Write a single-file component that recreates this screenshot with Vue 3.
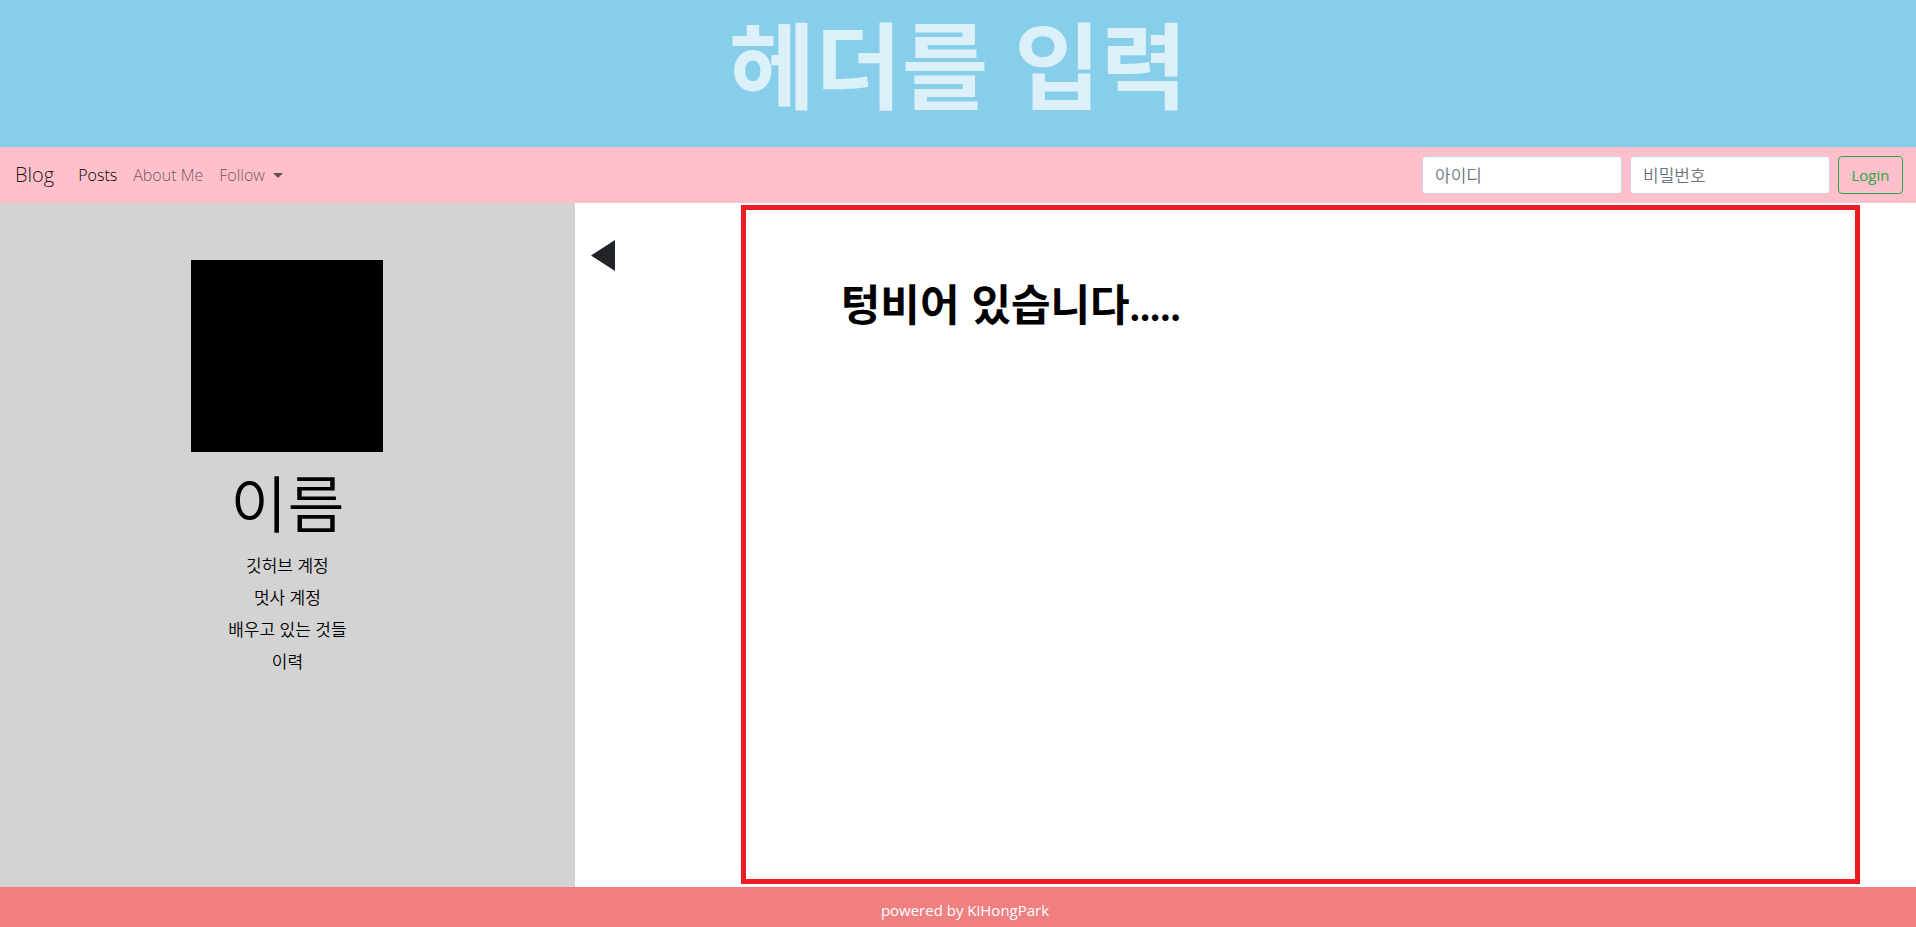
<script setup>
import { ref } from 'vue'

const userId = ref('')
const password = ref('')
const profileLinks = ['깃허브 계정', '멋사 계정', '배우고 있는 것들', '이력']
</script>

<template>
  <div class="page">
    <header class="banner">
      <h1>헤더를 입력</h1>
    </header>

    <nav class="navbar">
      <a class="brand" href="#">Blog</a>
      <a class="nav-link active" href="#">Posts</a>
      <a class="nav-link" href="#">About Me</a>
      <button class="nav-link dropdown" type="button">Follow<span class="caret"></span></button>
      <form class="login" @submit.prevent>
        <input v-model="userId" type="text" placeholder="아이디" aria-label="아이디" />
        <input v-model="password" type="password" placeholder="비밀번호" aria-label="비밀번호" />
        <button class="login-button" type="submit">Login</button>
      </form>
    </nav>

    <div class="body">
      <aside class="sidebar">
        <div class="photo"></div>
        <h2>이름</h2>
        <ul>
          <li v-for="link in profileLinks" :key="link"><a href="#">{{ link }}</a></li>
        </ul>
      </aside>
      <main class="content">
        <button class="toggle" type="button" aria-label="사이드바 접기">
          <svg width="24" height="31" viewBox="0 0 24 31"><path d="M0 15.5 24 0V31Z" fill="#212529" /></svg>
        </button>
        <section class="posts">
          <h3>텅비어 있습니다<span class="dots">.....</span></h3>
        </section>
      </main>
    </div>

    <footer class="footer">powered by KiHongPark</footer>
  </div>
</template>

<style>
body {
  margin: 0;
}
</style>

<style scoped>
.page {
  display: flex;
  flex-direction: column;
  min-height: 100vh;
  background: #fff;
  color: #000;
  font-family: "Open Sans", "Noto Sans CJK KR", sans-serif;
  font-size: 15px;
  line-height: 24px;
}
.page * {
  box-sizing: border-box;
}
a {
  color: inherit;
  text-decoration: none;
}
button {
  font: inherit;
  cursor: pointer;
}
h1, h2, h3 {
  margin: 0;
  font-family: "Liberation Sans", "Noto Sans CJK KR", sans-serif;
}
.banner {
  padding-bottom: 7px;
  background: #87ceeb;
  text-align: center;
}
.banner h1 {
  color: rgba(255, 255, 255, 0.7);
  font-size: 94px;
  font-weight: 700;
  line-height: 140px;
}
.navbar {
  display: flex;
  align-items: center;
  gap: 16px;
  height: 56px;
  padding: 0 13px 0 15px;
  background: #ffc0cb;
  font-size: 16px;
  font-weight: 300;
}
.brand {
  margin-right: 8px;
  color: rgba(0, 0, 0, 0.9);
  font-size: 20px;
}
.nav-link {
  padding: 0;
  border: 0;
  background: none;
  color: rgba(0, 0, 0, 0.6);
}
.nav-link.active {
  color: #000;
}
.dropdown {
  display: flex;
  align-items: center;
  gap: 8px;
}
.caret {
  border-top: 5px solid;
  border-right: 5px solid transparent;
  border-left: 5px solid transparent;
}
.login {
  display: flex;
  gap: 8px;
  margin-left: auto;
}
.login input {
  width: 200px;
  height: 38px;
  padding: 0 12px;
  border: 1px solid #ced4da;
  border-radius: 4px;
  background: #fff;
  color: #495057;
  font-family: "Open Sans", "Noto Sans CJK KR", sans-serif;
  font-size: 17px;
  font-weight: 350;
}
.login input::placeholder {
  color: #6c757d;
  opacity: 1;
}
.login-button {
  width: 65px;
  height: 38px;
  padding: 0;
  border: 1px solid #28a745;
  border-radius: 4px;
  background: transparent;
  color: #28a745;
  font-size: 15px;
  font-weight: 400;
}
.body {
  display: flex;
  flex: 1;
}
.sidebar {
  display: flex;
  flex-direction: column;
  align-items: center;
  width: 30%;
  padding-top: 57px;
  background: #d3d3d3;
}
.photo {
  width: 33.4%;
  aspect-ratio: 1;
  background: #000;
}
.sidebar h2 {
  margin-top: 12px;
  font-size: 62px;
  font-weight: 350;
  line-height: 86px;
}
.sidebar ul {
  margin: 0;
  padding: 0;
  list-style: none;
  text-align: center;
  font-size: 17px;
  font-weight: 350;
  line-height: 32px;
}
.content {
  display: flex;
  flex: 1;
  align-items: flex-start;
  padding: 2px 56px 3px 16px;
}
.toggle {
  display: flex;
  flex: none;
  width: 150px;
  margin-top: 35px;
  padding: 0;
  border: 0;
  background: none;
}
.posts {
  flex: 1;
  align-self: stretch;
  padding: 64px 95px;
  border: 5px solid #ed1c24;
}
.posts h3 {
  font-size: 43px;
  font-weight: 700;
  line-height: 62px;
}
.dots {
  font-family: Lato, sans-serif;
}
.footer {
  height: 40px;
  padding: 11px 0 5px 14px;
  background: #f08080;
  color: #fff;
  text-align: center;
}
</style>
